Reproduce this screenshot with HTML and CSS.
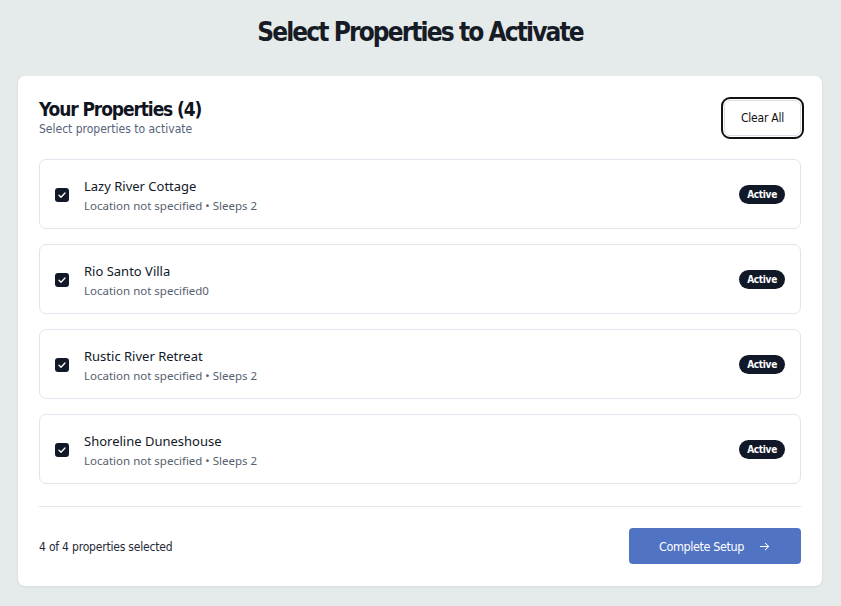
FILE: index.html
```html
<!DOCTYPE html>
<html>
<head>
<meta charset="utf-8">
<link rel="stylesheet" href="styles.css">
</head>
<body>
<div class="page">
  <h1 class="title">Select Properties to Activate</h1>
  <div class="card">
    <div class="card-head">
      <div>
        <h2 class="card-title">Your Properties (4)</h2>
        <div class="card-sub">Select properties to activate</div>
      </div>
      <button class="btn-clear">Clear All</button>
    </div>
    <div class="list">
      <div class="item">
        <span class="check"><svg viewBox="0 0 14 14" width="14" height="14"><path d="M4 7.2l2 2 4-4.2" fill="none" stroke="#fff" stroke-width="1.3" stroke-linecap="round" stroke-linejoin="round"/></svg></span>
        <div class="info">
          <div class="name">Lazy River Cottage</div>
          <div class="meta">Location not specified • Sleeps 2</div>
        </div>
        <span class="badge">Active</span>
      </div>
      <div class="item">
        <span class="check"><svg viewBox="0 0 14 14" width="14" height="14"><path d="M4 7.2l2 2 4-4.2" fill="none" stroke="#fff" stroke-width="1.3" stroke-linecap="round" stroke-linejoin="round"/></svg></span>
        <div class="info">
          <div class="name">Rio Santo Villa</div>
          <div class="meta">Location not specified0</div>
        </div>
        <span class="badge">Active</span>
      </div>
      <div class="item">
        <span class="check"><svg viewBox="0 0 14 14" width="14" height="14"><path d="M4 7.2l2 2 4-4.2" fill="none" stroke="#fff" stroke-width="1.3" stroke-linecap="round" stroke-linejoin="round"/></svg></span>
        <div class="info">
          <div class="name">Rustic River Retreat</div>
          <div class="meta">Location not specified • Sleeps 2</div>
        </div>
        <span class="badge">Active</span>
      </div>
      <div class="item">
        <span class="check"><svg viewBox="0 0 14 14" width="14" height="14"><path d="M4 7.2l2 2 4-4.2" fill="none" stroke="#fff" stroke-width="1.3" stroke-linecap="round" stroke-linejoin="round"/></svg></span>
        <div class="info">
          <div class="name">Shoreline Duneshouse</div>
          <div class="meta">Location not specified • Sleeps 2</div>
        </div>
        <span class="badge">Active</span>
      </div>
    </div>
    <div class="footer">
      <span class="count">4 of 4 properties selected</span>
      <button class="btn-primary">Complete Setup <svg viewBox="0 0 16 16" width="13" height="13"><path d="M3 8h10M9 4l4 4-4 4" fill="none" stroke="#fff" stroke-width="1.3" stroke-linecap="round" stroke-linejoin="round"/></svg></button>
    </div>
  </div>
</div>
</body>
</html>
```

FILE: styles.css
```css
html, body {
  margin: 0;
  padding: 0;
}
body {
  background: #e5eaea;
  font-family: "Noto Sans", "DejaVu Sans", sans-serif;
  color: #111827;
}
.page {
  padding: 13px 19px 20px 18px;
}
.title {
  margin: 0 0 25px 0;
  text-align: center;
  font-family: "DejaVu Sans Condensed", sans-serif;
  font-weight: 700;
  font-size: 26px;
  letter-spacing: -1.9px;
  line-height: 38px;
  color: #161b26;
}
.card {
  background: #fff;
  border-radius: 7px;
  box-shadow: 0 1px 3px rgba(0,0,0,0.08);
  padding: 21px 21px 22px 21px;
}
.card-head {
  display: flex;
  justify-content: space-between;
  align-items: flex-start;
}
.card-title {
  margin: 0;
  font-family: "DejaVu Sans Condensed", sans-serif;
  font-weight: 700;
  font-size: 19px;
  letter-spacing: -1.1px;
  line-height: 24px;
  color: #0f1420;
}
.card-sub {
  font-family: "DejaVu Sans Condensed", sans-serif;
  font-size: 12px;
  color: #56627a;
  margin-top: 1px;
}
.btn-clear {
  margin-top: 3px;
  width: 77px;
  height: 36px;
  border: 1px solid #d8dde5;
  outline: 2px solid #111;
  outline-offset: 1px;
  border-radius: 6px;
  background: #fff;
  font-family: "DejaVu Sans Condensed", sans-serif;
  font-size: 12px;
  letter-spacing: -0.2px;
  color: #111;
  padding: 0;
}
.list {
  margin-top: 23px;
  display: flex;
  flex-direction: column;
  gap: 15px;
}
.item {
  display: flex;
  align-items: center;
  height: 68px;
  box-sizing: content-box;
  border: 1px solid #e1e6ee;
  border-radius: 7px;
  padding: 0 15px;
}
.check {
  width: 14px;
  height: 14px;
  background: #111827;
  border-radius: 3px;
  display: flex;
  align-items: center;
  justify-content: center;
  margin-right: 15px;
  position: relative;
  top: 1px;
}
.info {
  flex: 1;
  padding-top: 2px;
}
.name {
  font-size: 13px;
  line-height: 18px;
  color: #111827;
}
.meta {
  font-size: 11.5px;
  line-height: 16px;
  color: #56606e;
  margin-top: 3px;
}
.badge {
  background: #111827;
  color: #fff;
  font-family: "DejaVu Sans Condensed", sans-serif;
  font-weight: 700;
  font-size: 10px;
  letter-spacing: -0.3px;
  border-radius: 10px;
  padding: 4px 8px 3px;
  line-height: 12px;
}
.footer {
  margin-top: 22px;
  border-top: 1px solid #e1e6ee;
  padding-top: 21px;
  display: flex;
  justify-content: space-between;
  align-items: center;
}
.count {
  font-family: "DejaVu Sans Condensed", sans-serif;
  font-size: 12px;
  letter-spacing: -0.2px;
  color: #1f2937;
  padding-top: 2px;
}
.btn-primary {
  width: 172px;
  height: 36px;
  border: none;
  border-radius: 4px;
  background: #5073c3;
  color: #fff;
  font-family: "DejaVu Sans Condensed", sans-serif;
  font-size: 12.5px;
  letter-spacing: -0.4px;
  display: flex;
  align-items: center;
  justify-content: center;
  gap: 14px;
  padding: 0;
}
```
